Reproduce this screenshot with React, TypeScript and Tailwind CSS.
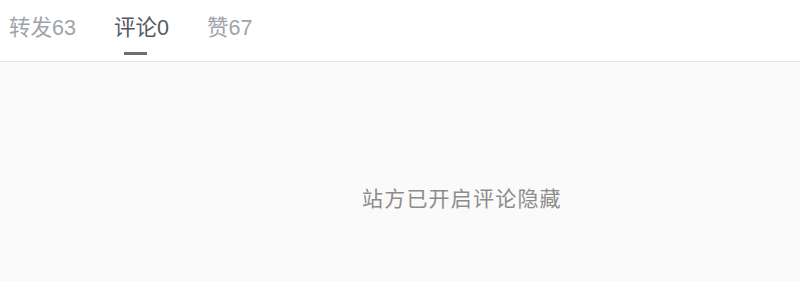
export default function App() {
  const tabs = [
    { label: "转发", count: 63, active: false },
    { label: "评论", count: 0, active: true },
    { label: "赞", count: 67, active: false },
  ];

  return (
    <div
      className="flex h-[281px] w-[800px] flex-col bg-[#fafafa]"
      style={{ fontFamily: '"Liberation Sans", "Noto Sans CJK SC", sans-serif' }}
    >
      <div className="flex h-[62px] shrink-0 items-start gap-[38px] border-b border-[#e5e5e5] bg-white pl-[9px] pt-[14px]">
        {tabs.map((tab) => (
          <div className="relative" key={tab.label}>
            <span
              className={`block text-[21.5px] leading-[28px] ${tab.active ? "text-[#55595f]" : "text-[#a0a4aa]"}`}
            >
              {tab.label}
              {tab.count}
            </span>
            {tab.active ? (
              <span className="absolute left-[10px] top-[38px] h-[3px] w-[23px] bg-[#6b6e73]" />
            ) : null}
          </div>
        ))}
      </div>
      <div className="flex-1 pl-[362px] pt-[123px]">
        <p className="text-[21px] leading-[28px] tracking-[1.2px] text-[#8c8c8c]">站方已开启评论隐藏</p>
      </div>
    </div>
  );
}
